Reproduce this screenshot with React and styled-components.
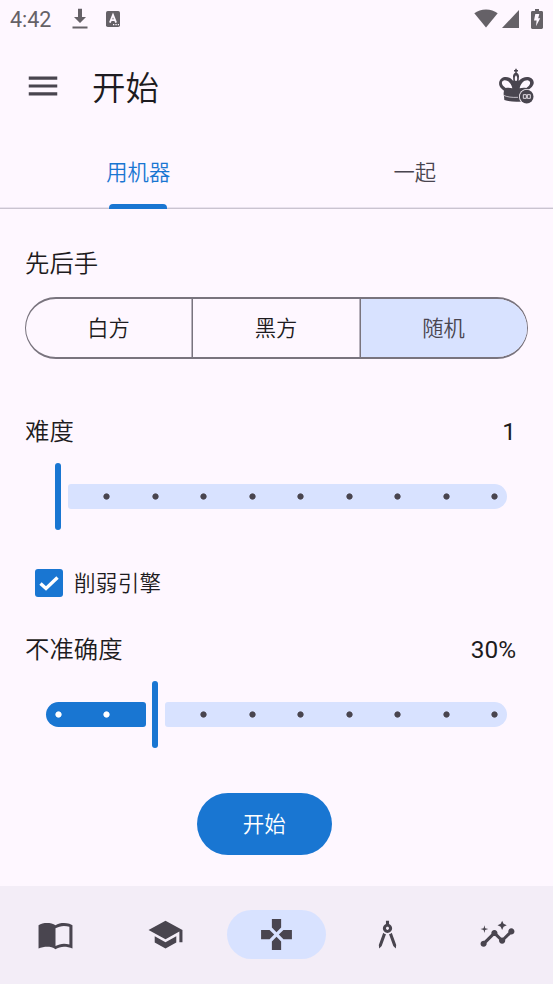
import React, { useState } from "react";
import styled, { createGlobalStyle } from "styled-components";
import {
  MdArchitecture,
  MdGames,
  MdInsights,
  MdMenu,
  MdSchool,
} from "react-icons/md";

const GlobalStyle = createGlobalStyle`
  * {
    box-sizing: border-box;
  }

  body {
    margin: 0;
    background-color: #fef7ff;
  }

  button {
    padding: 0;
    border: none;
    background: none;
    color: inherit;
    font: inherit;
  }

  svg {
    display: block;
  }
`;

const Screen = styled.div`
  display: flex;
  flex-direction: column;
  width: 553px;
  height: 984px;
  overflow: hidden;
  background-color: #fef7ff;
  color: #1d1b20;
  font-family: Roboto, "Noto Sans CJK SC", sans-serif;
  font-weight: 350;
`;

const StatusBar = styled.div`
  display: flex;
  align-items: center;
  height: 37px;
  padding: 0 10px 0 10px;
  color: #656167;
`;

const Clock = styled.span`
  width: 62px;
  padding-top: 2px;
  font-size: 21.5px;
  font-weight: 400;
  line-height: 37px;
`;

const StatusIcons = styled.div`
  display: flex;
  align-items: center;
  gap: ${(props) => props.$gap}px;
  margin-left: ${(props) => (props.$end ? "auto" : "0")};
`;

const BatterySlot = styled.span`
  margin-left: 8px;
`;

const AppBar = styled.header`
  display: flex;
  align-items: center;
  height: 98px;
  padding: 0 18px 0 24px;
`;

const IconButton = styled.button`
  display: flex;
  color: #49454f;
`;

const Title = styled.h1`
  flex: 1;
  margin: 5px 0 0 30px;
  font-size: 33.5px;
  font-weight: 350;
  line-height: 44px;
`;

const Tabs = styled.nav`
  display: grid;
  grid-template-columns: 1fr 1fr;
  height: 74px;
  border-bottom: 1px solid #cac4d0;
  box-shadow: inset 0 -1px #e9e2ee;
`;

const Tab = styled.button`
  position: relative;
  padding-bottom: 2px;
  font-size: 21.3px;
  color: ${(props) => (props.$active ? "#1976d2" : "#49454f")};

  &::after {
    content: "";
    display: ${(props) => (props.$active ? "block" : "none")};
    position: absolute;
    left: 109px;
    bottom: -1px;
    width: 58px;
    height: 5px;
    border-radius: 4px 4px 0 0;
    background-color: #1976d2;
  }
`;

const Content = styled.main`
  flex: 1;
  display: flex;
  flex-direction: column;
  padding: 35px 25px 0;
`;

const Row = styled.div`
  display: flex;
  justify-content: space-between;
  height: 40px;
  padding-right: 12px;
  font-size: 24.4px;
  line-height: 40px;
`;

const Value = styled.span`
  font-weight: 400;
`;

const Segments = styled.div`
  display: grid;
  grid-template-columns: 166px 168px 1fr;
  width: 503px;
  height: 62px;
  margin: 13px 0 53px;
  overflow: hidden;
  border: 2px solid #79747e;
  border-left-width: 1px;
  border-right-width: 1px;
  border-radius: 31px;
`;

const Segment = styled.button`
  padding: 0 1px 3px 0;
  font-size: 21.3px;
  color: ${(props) => (props.$selected ? "#49454f" : "#1d1b20")};
  background-color: ${(props) => (props.$selected ? "#d8e2ff" : "transparent")};

  & + & {
    border-left: 1px solid #79747e;
    box-shadow: -1px 0 #b8b2bd;
  }
`;

const SliderBox = styled.div`
  position: relative;
  display: flex;
  align-items: center;
  gap: 6px;
  width: 461px;
  height: 68px;
  margin: 10px 0 0 21px;
`;

const ActiveTrack = styled.div`
  height: 25px;
  border-radius: 12.5px 3px 3px 12.5px;
  background-color: #1976d2;
`;

const Handle = styled.div`
  width: 6.2px;
  height: 67px;
  border-radius: 3px;
  background-color: #1976d2;
`;

const InactiveTrack = styled.div`
  flex: 1;
  height: 25px;
  margin-left: 0.5px;
  border-radius: 3px 12.5px 12.5px 3px;
  background-color: #d8e2ff;
`;

const Ticks = styled.div`
  position: absolute;
  inset: 0 8px;
  display: flex;
  align-items: center;
  justify-content: space-between;
`;

const Tick = styled.span`
  width: 9px;
  height: 9px;
  background: radial-gradient(
    circle,
    ${(props) => props.$color} 2.7px,
    transparent 3.5px
  );
`;

const CheckRow = styled.label`
  display: flex;
  align-items: center;
  gap: 11px;
  height: 40px;
  margin: 33px 0 27px 10px;
  font-size: 21.5px;
  letter-spacing: 0.35px;
`;

const CheckBox = styled.span`
  width: 28px;
  height: 28px;
  border-radius: 3px;
  background-color: #1976d2;
`;

const CheckLabel = styled.span`
  padding-bottom: 3px;
`;

const StartButton = styled.button`
  width: 135.5px;
  height: 61.5px;
  margin: 45px 0 0 171.5px;
  padding-bottom: 2px;
  border-radius: 31px;
  background-color: #1976d2;
  color: #fff;
  font-size: 21.5px;
`;

const BottomBar = styled.nav`
  display: grid;
  grid-template-columns: repeat(5, 1fr);
  place-items: center;
  height: 98px;
  padding-bottom: 1px;
  background-color: #f3edf7;
`;

const Destination = styled.button`
  display: flex;
  align-items: center;
  justify-content: center;
  width: 99px;
  height: 49px;
  border-radius: 25px;
  color: #49454f;
  background-color: ${(props) => (props.$selected ? "#d8e2ff" : "transparent")};
`;

const DownloadIcon = () => (
  <svg width="16" height="22" viewBox="0 0 16 22" fill="currentColor">
    <path d="M6 .8h4V9h4l-6 6-6-6h4zM.5 18.6h15v2H.5z" />
  </svg>
);

const LanguageIcon = () => (
  <svg width="14" height="16" viewBox="0 0 14 16">
    <rect width="14" height="16" rx="1.8" fill="currentColor" />
    <path
      d="M3.9 11.6 7 4l3.1 7.6M5 9.2h4"
      fill="none"
      stroke="#fef7ff"
      strokeWidth="1.8"
    />
    <path d="M7 13h1.3v1.3H7zm2.4 0h1.3v1.3H9.4zm2.4 0h1.2v1.3h-1.2z" fill="#fef7ff" />
  </svg>
);

const WifiIcon = () => (
  <svg width="24" height="19" viewBox="0 0 24 19" fill="currentColor">
    <path d="M12 18.5.3 4.2C3.5 1.7 7.5.4 12 .4s8.5 1.3 11.7 3.8z" />
  </svg>
);

const SignalIcon = () => (
  <svg width="17" height="18" viewBox="0 0 17 18" fill="currentColor">
    <path d="M17 0v18H0z" />
  </svg>
);

const BatteryIcon = () => (
  <svg width="12" height="20" viewBox="0 0 12 20">
    <path
      d="M4 0h4v2h2.6c.8 0 1.4.6 1.4 1.4v15.2c0 .8-.6 1.4-1.4 1.4H1.4C.6 20 0 19.4 0 18.6V3.4C0 2.6.6 2 1.4 2H4z"
      fill="currentColor"
    />
    <path d="M4.3 5h4L7.2 9.2h2L5 17.2l.6-5.7H3z" fill="#fef7ff" />
  </svg>
);

const KingIcon = () => (
  <svg width="37" height="36" viewBox="114 204 111 108">
    <path d="M168 206v15M162 212h12" stroke="currentColor" strokeWidth="4.5" />
    <path
      fill="currentColor"
      fillRule="evenodd"
      d="M168 218c5 0 9 5 9 11l-1 14c8-9 18-13 28-12 15 2 21 15 15 25-4 7-11 12-17 16v28c-17 7-47 7-69 0l-1-11c-2-7-1-12 0-17-6-4-12-9-14-16-3-12 4-23 16-25 10-1 19 3 26 12l-1-14c0-6 4-11 9-11zm0 8c-4 4-4 9-3 16h6c1-7 1-12-3-16zm-11 39c-3-15-13-25-24-24-9 2-9 11-4 16l8 7c7-1 13-1 20 1zm22 0c7-2 13-2 20-1l8-7c5-5 5-14-4-16-11-1-21 9-24 24z"
    />
    <path
      d="M131 286c10 5 25 7 43 6"
      stroke="#fef7ff"
      strokeOpacity="0.8"
      strokeWidth="2.5"
      fill="none"
    />
    <circle cx="200" cy="290" r="23" fill="#fef7ff" />
    <circle cx="200" cy="290" r="20.5" fill="currentColor" />
    <path
      d="M190 284h9v11h-9zM202 284h9v11h-9z"
      fill="none"
      stroke="#fef7ff"
      strokeWidth="2.5"
    />
  </svg>
);

const BookIcon = () => (
  <svg width="37" height="37" viewBox="0 0 24 24" fill="currentColor">
    <path
      fillRule="evenodd"
      d="M21 5c-1.11-.35-2.33-.5-3.5-.5-1.95 0-4.05.4-5.5 1.5-1.45-1.1-3.55-1.5-5.5-1.5S2.45 4.9 1 6v15.1C2.6 20.4 5.05 20 6.5 20c1.95 0 4.05.4 5.5 1.5 1.35-.85 3.8-1.5 5.5-1.5 1.65 0 3.85.3 5.5 1.1V6c-.6-.45-1.25-.75-2-1zm0 13.5c-1.1-.35-2.3-.5-3.5-.5-1.7 0-4.15.65-5.5 1.5V8c1.35-.85 3.8-1.5 5.5-1.5 1.2 0 2.4.15 3.5.5z"
    />
  </svg>
);

const CheckIcon = () => (
  <svg width="28" height="28" viewBox="0 0 28 28">
    <path d="m5.5 14.5 5.5 5L22.5 8.5" fill="none" stroke="#fff" strokeWidth="3.4" />
  </svg>
);

const Slider = ({ step }) => (
  <SliderBox>
    {step > 0 && <ActiveTrack style={{ width: step * 48.47 + 3.3 }} />}
    <Handle style={step === 0 ? { marginLeft: 9.3 } : undefined} />
    <InactiveTrack />
    <Ticks>
      {Array.from({ length: 10 }, (_, i) => (
        <Tick
          key={i}
          $color={i < step ? "#fff" : i === step ? "transparent" : "#49454f"}
        />
      ))}
    </Ticks>
  </SliderBox>
);

const sides = ["白方", "黑方", "随机"];

const destinations = [
  <BookIcon />,
  <MdSchool size={37} />,
  <MdGames size={37} />,
  <MdArchitecture size={37} />,
  <MdInsights size={37} />,
];

function App() {
  const [tab, setTab] = useState(0);
  const [side, setSide] = useState(2);
  const [page, setPage] = useState(2);
  const [weaken, setWeaken] = useState(true);

  return (
    <Screen>
      <GlobalStyle />
      <StatusBar>
        <Clock>4:42</Clock>
        <StatusIcons $gap={18}>
          <DownloadIcon />
          <LanguageIcon />
        </StatusIcons>
        <StatusIcons $end $gap={4}>
          <WifiIcon />
          <SignalIcon />
          <BatterySlot>
            <BatteryIcon />
          </BatterySlot>
        </StatusIcons>
      </StatusBar>
      <AppBar>
        <IconButton>
          <MdMenu size={38} />
        </IconButton>
        <Title>开始</Title>
        <IconButton>
          <KingIcon />
        </IconButton>
      </AppBar>
      <Tabs>
        {["用机器", "一起"].map((label, i) => (
          <Tab key={label} $active={tab === i} onClick={() => setTab(i)}>
            {label}
          </Tab>
        ))}
      </Tabs>
      <Content>
        <Row>先后手</Row>
        <Segments>
          {sides.map((label, i) => (
            <Segment
              key={label}
              $selected={side === i}
              onClick={() => setSide(i)}
            >
              {label}
            </Segment>
          ))}
        </Segments>
        <Row>
          <span>难度</span>
          <Value>1</Value>
        </Row>
        <Slider step={0} />
        <CheckRow onClick={() => setWeaken(!weaken)}>
          <CheckBox>{weaken && <CheckIcon />}</CheckBox>
          <CheckLabel>削弱引擎</CheckLabel>
        </CheckRow>
        <Row>
          <span>不准确度</span>
          <Value>30%</Value>
        </Row>
        <Slider step={2} />
        <StartButton>开始</StartButton>
      </Content>
      <BottomBar>
        {destinations.map((icon, i) => (
          <Destination
            key={i}
            $selected={page === i}
            onClick={() => setPage(i)}
          >
            {icon}
          </Destination>
        ))}
      </BottomBar>
    </Screen>
  );
}

export default App;
